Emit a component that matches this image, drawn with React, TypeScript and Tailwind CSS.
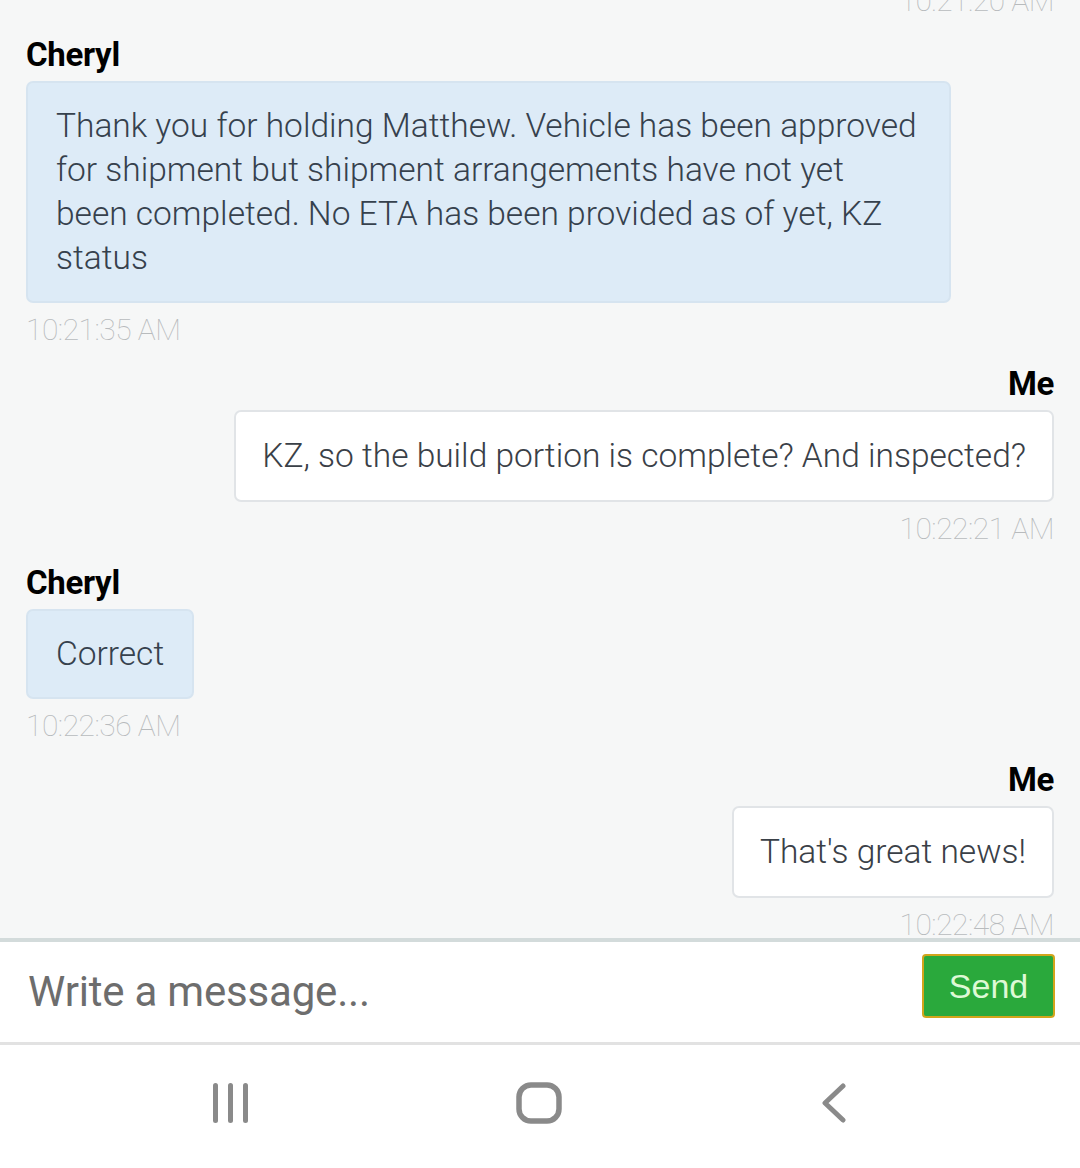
import React from 'react';

type Msg = {
  from: 'them' | 'me';
  name?: string;
  text?: string;
  time: string;
};

const messages: Msg[] = [
  { from: 'me', time: '10:21:20 AM' },
  {
    from: 'them',
    name: 'Cheryl',
    text: 'Thank you for holding Matthew. Vehicle has been approved for shipment but shipment arrangements have not yet been completed. No ETA has been provided as of yet, KZ status',
    time: '10:21:35 AM',
  },
  { from: 'me', name: 'Me', text: 'KZ, so the build portion is complete? And inspected?', time: '10:22:21 AM' },
  { from: 'them', name: 'Cheryl', text: 'Correct', time: '10:22:36 AM' },
  { from: 'me', name: 'Me', text: "That's great news!", time: '10:22:48 AM' },
];

function Message({ msg }: { msg: Msg }) {
  const mine = msg.from === 'me';
  return (
    <div className={mine ? 'flex flex-col items-end' : 'flex flex-col items-start'}>
      {msg.name && (
        <div className="text-[33px] leading-[40px] font-bold text-black mb-[6px] tracking-[-0.3px]">{msg.name}</div>
      )}
      {msg.text && (
        <div
          className={
            mine
              ? "max-w-[925px] bg-white border-[2px] border-[#e1e4e7] rounded-[7px] px-[26px] py-[22px] text-[33.5px] leading-[44px] font-['Roboto_Light','Roboto',sans-serif] font-light text-[#3a4047]"
              : "max-w-[925px] bg-[#ddebf7] border-[2px] border-[#d6e4f0] rounded-[7px] px-[28px] py-[21px] text-[33.5px] leading-[44px] font-['Roboto_Light','Roboto',sans-serif] font-light text-[#36414d]"
          }
        >
          {msg.text}
        </div>
      )}
      <div className="mt-[7px] text-[30px] leading-[40px] font-['Roboto_Thin','Roboto_Light','Roboto',sans-serif] font-thin text-[#b8bbbd] tracking-[-0.5px]">
        {msg.time}
      </div>
    </div>
  );
}

export default function App() {
  return (
    <div className="w-[1080px] h-[1168px] flex flex-col bg-white overflow-hidden font-['Roboto','Noto_Sans',sans-serif]">
      <div className="h-[938px] overflow-hidden bg-[#f6f7f7] px-[26px]">
        <div className="-mt-[26px] flex flex-col gap-[14px]">
          {messages.map((m, i) => (
            <Message key={i} msg={m} />
          ))}
        </div>
      </div>

      <div className="h-[4px] bg-[#d3dbdb]" />

      <div className="h-[100px] flex items-center justify-between pl-[28px] pr-[25px] bg-white">
        <div className="text-[42px] leading-none text-[#6d6d6d] tracking-[-0.2px]">Write a message...</div>
        <button className="w-[133px] h-[64px] -mt-[12px] rounded-[4px] bg-[#2aa93c] border-[2px] border-[#d2a51c] text-[34px] text-[#def9d6] font-['Liberation_Sans',Arial,sans-serif]">
          Send
        </button>
      </div>

      <div className="h-[3px] bg-[#e2e2e2]" />

      <div className="flex-1 bg-white flex items-center pl-[213px] pb-[8px]">
        <svg width="36" height="40" viewBox="0 0 36 40">
          <g stroke="#8a8a8a" strokeWidth="5" strokeLinecap="round">
            <line x1="2.5" y1="2.5" x2="2.5" y2="37.5" />
            <line x1="17.5" y1="2.5" x2="17.5" y2="37.5" />
            <line x1="32.5" y1="2.5" x2="32.5" y2="37.5" />
          </g>
        </svg>
        <svg width="46" height="42" viewBox="0 0 46 42" className="ml-[267px]">
          <rect x="3" y="3" width="40" height="36" rx="12" fill="none" stroke="#8a8a8a" strokeWidth="5.5" />
        </svg>
        <svg width="24" height="40" viewBox="0 0 24 40" className="ml-[260px]">
          <polyline points="21,3 3,20 21,37" fill="none" stroke="#8a8a8a" strokeWidth="5" strokeLinecap="round" strokeLinejoin="round" />
        </svg>
      </div>
    </div>
  );
}
